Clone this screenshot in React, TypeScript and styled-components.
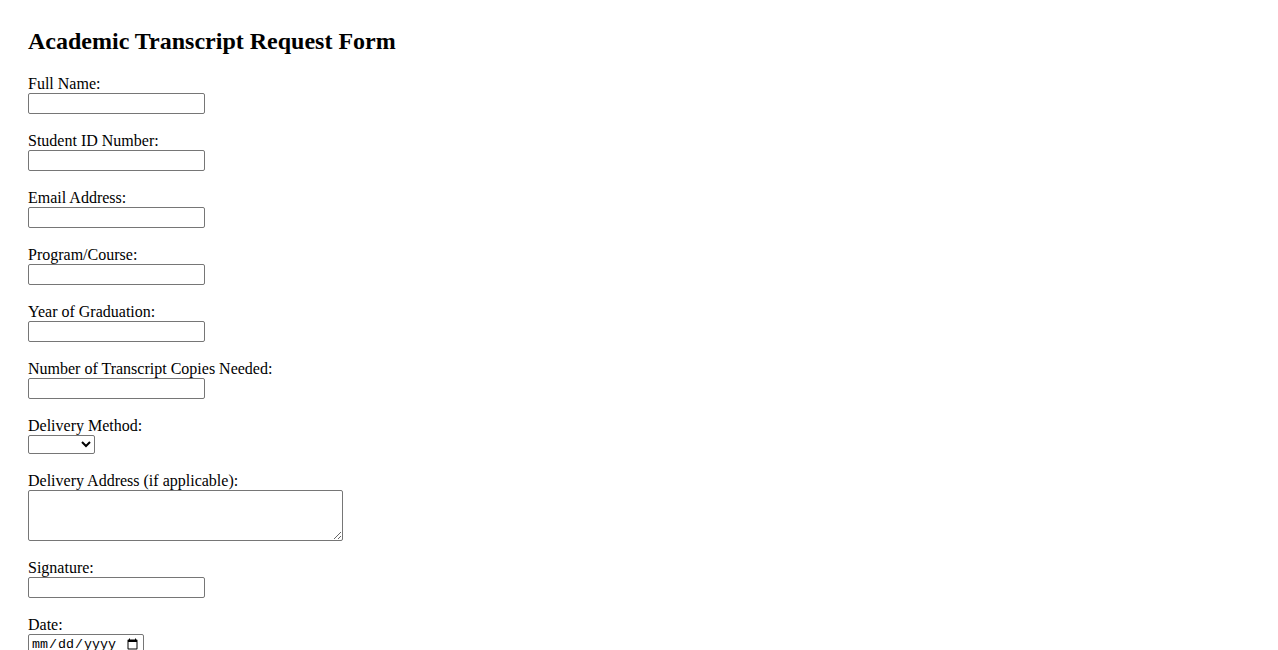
import React from "react";
import styled, {createGlobalStyle} from "styled-components";

const GlobalStyle = createGlobalStyle`
  body {
    margin: 0;
    background: #fff;
    color: #000;
    font-family: "Liberation Serif", "Times New Roman", serif;
  }
`;

const Form = styled.form`
  padding: 28px;
`;

const Title = styled.h2`
  margin: 0 0 20px;
  font-size: 24px;
  line-height: 27px;
  font-weight: bold;
`;

const Field = styled.div`
  display: flex;
  flex-direction: column;
  align-items: flex-start;
  margin-bottom: 18px;
`;

const Label = styled.label`
  font-size: 16px;
  line-height: 18px;
`;

const control = `
  box-sizing: border-box;
  border: 1px solid #767676;
  border-radius: 2px;
  background: #fff;
  margin: 0;
  font-family: "Liberation Sans", Arial, sans-serif;
  font-size: 13.33px;
`;

const TextInput = styled.input`
  ${control}
  width: 177px;
  height: 21px;
  padding: 1px 2px;
`;

const Select = styled.select`
  ${control}
  width: 67px;
  height: 19px;
  padding: 0;
`;

const TextArea = styled.textarea`
  ${control}
  width: 315px;
  height: 51px;
  padding: 2px;
  font-family: "Liberation Mono", monospace;
`;

const DateInput = styled.input`
  ${control}
  width: 116px;
  height: 21px;
  padding: 1px 2px;
  font-family: "Liberation Mono", monospace;
`;

const textFields = [
    {id: "fullName", label: "Full Name:"},
    {id: "studentId", label: "Student ID Number:"},
    {id: "email", label: "Email Address:"},
    {id: "program", label: "Program/Course:"},
    {id: "gradYear", label: "Year of Graduation:"},
    {id: "copies", label: "Number of Transcript Copies Needed:"},
];

export default function App() {
    return (
        <>
            <GlobalStyle/>
            <Form>
                <Title>Academic Transcript Request Form</Title>
                {textFields.map(f => (
                    <Field key={f.id}>
                        <Label htmlFor={f.id}>{f.label}</Label>
                        <TextInput id={f.id} type="text"/>
                    </Field>
                ))}
                <Field>
                    <Label htmlFor="delivery">Delivery Method:</Label>
                    <Select id="delivery" defaultValue="">
                        <option value=""></option>
                        <option value="email">Email</option>
                        <option value="mail">Mail</option>
                        <option value="pickup">Pickup</option>
                    </Select>
                </Field>
                <Field>
                    <Label htmlFor="address">Delivery Address (if applicable):</Label>
                    <TextArea id="address"/>
                </Field>
                <Field>
                    <Label htmlFor="signature">Signature:</Label>
                    <TextInput id="signature" type="text"/>
                </Field>
                <Field>
                    <Label htmlFor="date">Date:</Label>
                    <DateInput id="date" type="date"/>
                </Field>
            </Form>
        </>
    );
}
